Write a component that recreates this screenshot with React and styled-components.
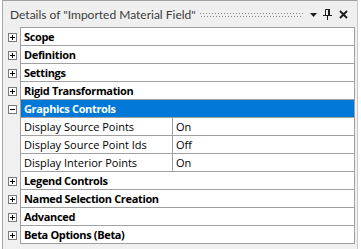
import React from "react";
import styled, { createGlobalStyle } from "styled-components";

const Global = createGlobalStyle`
  html, body { margin: 0; padding: 0; background: #ffffff; }
  body { font-family: "Open Sans", "Noto Sans", sans-serif; }
`;

const Panel = styled.div`
  margin-left: 2px;
  width: 356px;
  height: 249px;
  box-sizing: border-box;
  background: #f0f0f0;
  border-left: 1px solid #a8a8a8;
  border-right: 1px solid #c8c8c8;
  display: flex;
  flex-direction: column;
`;

const TitleBar = styled.div`
  height: 28px;
  box-sizing: border-box;
  border-top: 1px solid #a0a0a0;
  display: flex;
  align-items: center;
  padding: 0 9px 0 7px;
  background: #efefef;
`;

const TitleText = styled.span`
  font-family: Lato, "Liberation Sans", sans-serif;
  font-size: 12px;
  color: #3c3c3c;
  white-space: nowrap;
`;

const Grip = styled.div`
  flex: 1;
  height: 4px;
  margin: 0 6px 0 4px;
  background:
    linear-gradient(to right, #8c8c8c 1px, transparent 1px) 0 0 / 3px 1px repeat-x,
    linear-gradient(to right, #8c8c8c 1px, transparent 1px) 1px 3px / 3px 1px repeat-x;
`;

const IconBtn = styled.span`
  display: flex;
  align-items: center;
  justify-content: center;
  width: ${(p) => p.w}px;
  margin-left: ${(p) => p.gap}px;
`;

const Grid = styled.div`
  padding-right: 2px;
`;

const Row = styled.div`
  display: flex;
  height: 18px;
`;

const Gutter = styled.div`
  width: 17px;
  flex: none;
  display: flex;
  align-items: center;
  padding-left: 5px;
  box-sizing: border-box;
`;

const Expander = styled.span`
  width: 9px;
  height: 9px;
  box-sizing: border-box;
  border: 1px solid #7a7a7a;
  background: #ffffff;
  position: relative;
  &::before {
    content: "";
    position: absolute;
    left: 1px;
    top: 3px;
    width: 5px;
    height: 1px;
    background: #000;
  }
  &::after {
    content: "";
    position: absolute;
    left: 3px;
    top: 1px;
    width: 1px;
    height: 5px;
    background: #000;
    display: ${(p) => (p.open ? "none" : "block")};
  }
`;

const Body = styled.div`
  flex: 1;
  display: flex;
  box-sizing: border-box;
  border: 1px solid #a0a0a0;
  border-top-width: ${(p) => (p.first ? 1 : 0)}px;
  background: ${(p) => (p.selected ? "#0078d7" : "#ffffff")};
  color: ${(p) => (p.selected ? "#ffffff" : "#000000")};
  height: ${(p) => (p.first ? 19 : 18)}px;
  margin-top: ${(p) => (p.first ? -1 : 0)}px;
`;

const Label = styled.div`
  font-size: 11px;
  font-weight: ${(p) => (p.bold ? 700 : 400)};
  letter-spacing: ${(p) => (p.bold ? "-0.35px" : "0")};
  display: flex;
  align-items: center;
  padding-left: 3px;
  white-space: nowrap;
  ${(p) => (p.bold ? "flex: 1;" : "width: 148px; border-right: 1px solid #a0a0a0;")}
`;

const Value = styled.div`
  flex: 1;
  font-size: 11px;
  display: flex;
  align-items: center;
  padding-left: 3px;
`;

const rows = [
  { t: "Scope" },
  { t: "Definition" },
  { t: "Settings" },
  { t: "Rigid Transformation" },
  { t: "Graphics Controls", open: true, selected: true },
  { p: "Display Source Points", v: "On" },
  { p: "Display Source Point Ids", v: "Off" },
  { p: "Display Interior Points", v: "On" },
  { t: "Legend Controls" },
  { t: "Named Selection Creation" },
  { t: "Advanced" },
  { t: "Beta Options (Beta)" },
];

export default function App() {
  return (
    <>
      <Global />
      <Panel>
        <TitleBar>
          <TitleText>Details of "Imported Material Field"</TitleText>
          <Grip />
          <IconBtn w={9} gap={0}>
            <svg width="7" height="4" viewBox="0 0 7 4"><path d="M0 0H7L3.5 4Z" fill="#1e1e1e" /></svg>
          </IconBtn>
          <IconBtn w={10} gap={4}>
            <svg width="9" height="11" viewBox="0 0 9 11">
              <path d="M2.5 0.5H6.5V6.5M2.5 0.5V6.5" stroke="#1e1e1e" fill="none" />
              <rect x="5" y="0" width="2" height="7" fill="#1e1e1e" />
              <rect x="0" y="6" width="9" height="1" fill="#1e1e1e" />
              <rect x="4" y="7" width="1" height="4" fill="#1e1e1e" />
            </svg>
          </IconBtn>
          <IconBtn w={10} gap={6}>
            <svg width="9" height="9" viewBox="0 0 9 9">
              <path d="M1 1L8 8M8 1L1 8" stroke="#1e1e1e" strokeWidth="1.9" />
            </svg>
          </IconBtn>
        </TitleBar>
        <Grid>
          {rows.map((r, i) => (
            <Row key={i}>
              <Gutter>{r.t && <Expander open={r.open} />}</Gutter>
              <Body first={i === 0} selected={r.selected}>
                {r.t ? (
                  <Label bold>{r.t}</Label>
                ) : (
                  <>
                    <Label>{r.p}</Label>
                    <Value>{r.v}</Value>
                  </>
                )}
              </Body>
            </Row>
          ))}
        </Grid>
      </Panel>
    </>
  );
}
